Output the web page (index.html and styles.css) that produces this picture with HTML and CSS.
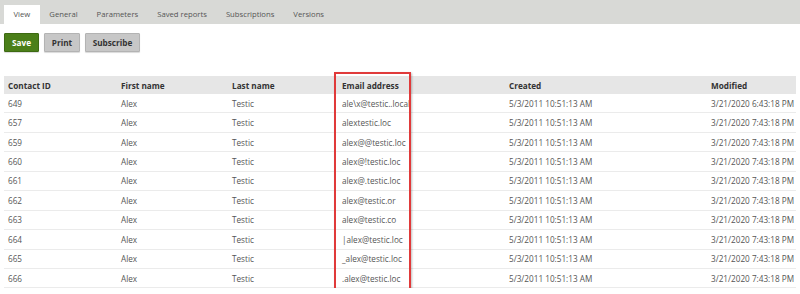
FILE: index.html
```html
<!DOCTYPE html>
<html lang="en">
<head>
    <meta charset="UTF-8">
    <title>Contacts report</title>
    <link rel="stylesheet" href="styles.css">
</head>
<body>
    <div class="tabs">
        <div class="tab active">View</div>
        <div class="tab">General</div>
        <div class="tab">Parameters</div>
        <div class="tab">Saved reports</div>
        <div class="tab">Subscriptions</div>
        <div class="tab">Versions</div>
    </div>

    <div class="actions">
        <button class="btn btn-primary btn-save">Save</button>
        <button class="btn btn-print">Print</button>
        <button class="btn btn-subscribe">Subscribe</button>
    </div>

    <div class="report">
        <table class="grid">
            <colgroup>
                <col class="c-id">
                <col class="c-first">
                <col class="c-last">
                <col class="c-email">
                <col class="c-created">
                <col class="c-modified">
            </colgroup>
            <thead>
                <tr>
                    <th>Contact ID</th>
                    <th>First name</th>
                    <th>Last name</th>
                    <th>Email address</th>
                    <th>Created</th>
                    <th>Modified</th>
                </tr>
            </thead>
            <tbody>
                <tr><td>649</td><td>Alex</td><td>Testic</td><td>ale\x@testic..local</td><td>5/3/2011 10:51:13 AM</td><td>3/21/2020 6:43:18 PM</td></tr>
                <tr><td>657</td><td>Alex</td><td>Testic</td><td>alextestic.loc</td><td>5/3/2011 10:51:13 AM</td><td>3/21/2020 7:43:18 PM</td></tr>
                <tr><td>659</td><td>Alex</td><td>Testic</td><td>alex@@testic.loc</td><td>5/3/2011 10:51:13 AM</td><td>3/21/2020 7:43:18 PM</td></tr>
                <tr><td>660</td><td>Alex</td><td>Testic</td><td>alex@!testic.loc</td><td>5/3/2011 10:51:13 AM</td><td>3/21/2020 7:43:18 PM</td></tr>
                <tr><td>661</td><td>Alex</td><td>Testic</td><td>alex@.testic.loc</td><td>5/3/2011 10:51:13 AM</td><td>3/21/2020 7:43:18 PM</td></tr>
                <tr><td>662</td><td>Alex</td><td>Testic</td><td>alex@testic.or</td><td>5/3/2011 10:51:13 AM</td><td>3/21/2020 7:43:18 PM</td></tr>
                <tr><td>663</td><td>Alex</td><td>Testic</td><td>alex@testic.co</td><td>5/3/2011 10:51:13 AM</td><td>3/21/2020 7:43:18 PM</td></tr>
                <tr><td>664</td><td>Alex</td><td>Testic</td><td>|alex@testic.loc</td><td>5/3/2011 10:51:13 AM</td><td>3/21/2020 7:43:18 PM</td></tr>
                <tr><td>665</td><td>Alex</td><td>Testic</td><td>_alex@testic.loc</td><td>5/3/2011 10:51:13 AM</td><td>3/21/2020 7:43:18 PM</td></tr>
                <tr><td>666</td><td>Alex</td><td>Testic</td><td>.alex@testic.loc</td><td>5/3/2011 10:51:13 AM</td><td>3/21/2020 7:43:18 PM</td></tr>
            </tbody>
        </table>
        <!-- annotation box around the email column -->
        <div class="highlight"></div>
    </div>
</body>
</html>
```

FILE: styles.css
```css
body {
    margin: 0;
    font-family: 'Open Sans', 'Noto Sans', sans-serif;
    font-size: 8.2px;
    color: #555;
    background-color: #ffffff;
}
.tabs {
    display: flex;
    align-items: flex-end;
    height: 24px;
    padding-left: 4px;
    background-color: #d8d9d6;
}
.tab {
    height: 19px;
    line-height: 19px;
    padding: 0 9.5px;
    font-size: 7.7px;
    color: #555;
}
.tab.active {
    background-color: #ffffff;
}
.actions {
    display: flex;
    gap: 5px;
    padding: 9px 4px 0;
}
.btn {
    height: 19px;
    padding: 0;
    font-family: inherit;
    font-size: 8.2px;
    font-weight: bold;
    color: #333;
    background-color: #c7c7c7;
    border: 1px solid #b3b3b3;
    border-radius: 1px;
    box-shadow: 0 1px 1px rgba(0, 0, 0, 0.15);
}
.btn-primary {
    color: #ffffff;
    background-color: #4b7f19;
    border-color: #3d6a12;
}
.btn-save { width: 35px; }
.btn-print { width: 36px; }
.btn-subscribe { width: 55px; }
.report {
    position: relative;
    margin: 24px 4px 0;
}
.grid {
    width: 792px;
    border-collapse: collapse;
    table-layout: fixed;
}
.c-id { width: 113px; }
.c-first { width: 111px; }
.c-last { width: 110px; }
.c-email { width: 167px; }
.c-created { width: 202px; }
.grid th {
    height: 18px;
    padding: 0 4px;
    text-align: left;
    font-weight: bold;
    color: #333;
    background-color: #e6e6e6;
}
.grid td {
    height: 18.45px;
    padding: 0 4px;
    border-bottom: 1px solid #ebebeb;
    white-space: nowrap;
}
.highlight {
    position: absolute;
    top: -4px;
    left: 330px;
    width: 73px;
    height: 215px;
    border: 2px solid #e03a3a;
    box-shadow: 1px 1px 2px rgba(0, 0, 0, 0.25);
}
```
